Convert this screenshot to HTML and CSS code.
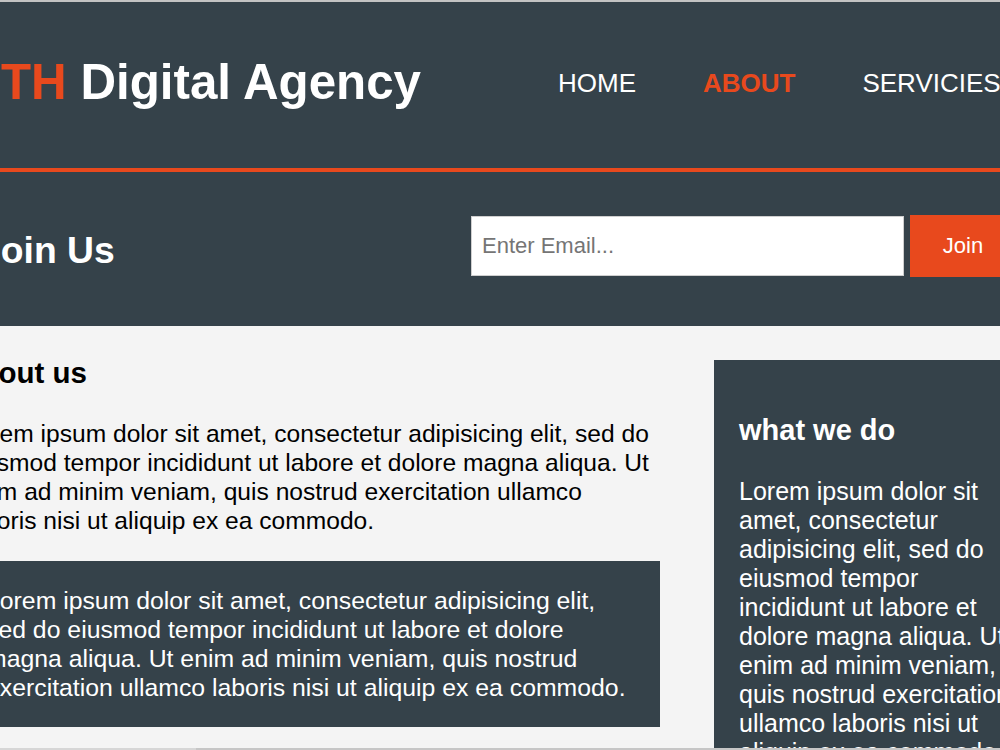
FILE: index.html
```html
<!DOCTYPE html>
<html lang="en">
<head>
<meta charset="utf-8">
<title>TH Digital Agency | About</title>
<link rel="stylesheet" href="styles.css">
</head>
<body>
<div class="topline"></div>
<header class="site-header">
  <div class="header-inner">
    <h1 class="brand"><span class="highlight">TH</span> Digital Agency</h1>
    <nav class="main-nav">
      <ul>
        <li><a href="#">HOME</a></li>
        <li class="current"><a href="#">ABOUT</a></li>
        <li><a href="#">SERVICIES</a></li>
      </ul>
    </nav>
  </div>
</header>
<section class="newsletter">
  <div class="newsletter-inner">
    <h2 class="newsletter-title">Join Us</h2>
    <form class="newsletter-form">
      <input type="email" placeholder="Enter Email...">
      <button type="button">Join</button>
    </form>
  </div>
</section>
<section class="main-area">
  <article class="main-col">
    <h1 class="page-title">about us</h1>
    <p class="lead">Lorem ipsum dolor sit amet, consectetur adipisicing elit, sed do eiusmod tempor incididunt ut labore et dolore magna aliqua. Ut enim ad minim veniam, quis nostrud exercitation ullamco laboris nisi ut aliquip ex ea commodo.</p>
    <div class="dark-box">
      <p>Lorem ipsum dolor sit amet, consectetur adipisicing elit, sed do eiusmod tempor incididunt ut labore et dolore magna aliqua. Ut enim ad minim veniam, quis nostrud exercitation ullamco laboris nisi ut aliquip ex ea commodo.</p>
    </div>
  </article>
  <aside class="sidebar">
    <h1 class="sidebar-title">what we do</h1>
    <p>Lorem ipsum dolor sit amet, consectetur adipisicing elit, sed do eiusmod tempor incididunt ut labore et dolore magna aliqua. Ut enim ad minim veniam, quis nostrud exercitation ullamco laboris nisi ut aliquip ex ea commodo.</p>
  </aside>
</section>
<div class="scrollbar"></div>
</body>
</html>
```
FILE: styles.css
```css
html, body {
  margin: 0;
  padding: 0;
  overflow: hidden;
}
body {
  font-family: "Liberation Sans", Arial, sans-serif;
  background: #f4f4f4;
  color: #000;
  width: 1000px;
  height: 750px;
}
.topline {
  height: 2px;
  background: #c3c3c3;
}
.site-header {
  background: #35424a;
  height: 166px;
  border-bottom: 4px solid #e8491d;
  color: #fff;
}
.header-inner {
  display: flex;
  align-items: flex-start;
  white-space: nowrap;
}
.brand {
  margin: 52px 0 0 1px;
  font-size: 49.3px;
  font-weight: bold;
  line-height: 56px;
}
.highlight {
  color: #e8491d;
}
.main-nav {
  margin: 66px 0 0 137px;
}
.main-nav ul {
  list-style: none;
  margin: 0;
  padding: 0;
  display: flex;
  column-gap: 67px;
}
.main-nav a {
  color: #fff;
  text-decoration: none;
  font-size: 26px;
  line-height: 30px;
}
.main-nav .current a {
  color: #e8491d;
  font-weight: bold;
}
.newsletter {
  background: #35424a;
  height: 154px;
  color: #fff;
}
.newsletter-inner {
  display: flex;
  align-items: flex-start;
  margin-left: -20px;
  white-space: nowrap;
}
.newsletter-title {
  flex: none;
  width: 491px;
  margin: 56px 0 0 0;
  font-size: 37.3px;
  line-height: 44px;
  font-weight: bold;
}
.newsletter-form {
  display: flex;
  align-items: center;
  gap: 6px;
  margin-top: 43px;
}
.newsletter-form input {
  box-sizing: border-box;
  width: 433px;
  height: 60px;
  margin: 0;
  padding: 0 10px;
  border: 1px solid #cfcfcf;
  background: #fff;
  font-family: "Liberation Sans", Arial, sans-serif;
  font-size: 22px;
  color: #333;
  outline: none;
}
.newsletter-form input::placeholder {
  color: #757575;
}
.newsletter-form button {
  box-sizing: border-box;
  height: 62px;
  width: 106px;
  margin: 0;
  padding: 0;
  border: none;
  background: #e8491d;
  color: #fff;
  font-family: "Liberation Sans", Arial, sans-serif;
  font-size: 22px;
}
.main-area {
  display: flex;
  align-items: flex-start;
  margin-left: -36px;
  gap: 54px;
}
.main-col {
  flex: none;
  width: 696px;
}
.page-title {
  margin: 30px 0 0 0;
  font-size: 29.5px;
  line-height: 33px;
  font-weight: bold;
}
.lead {
  margin: 30px 0 0 0;
  font-size: 24.6px;
  line-height: 29px;
}
.dark-box {
  margin-top: 26px;
  background: #35424a;
  color: #fff;
  padding: 25px 20px 25px 22px;
}
.dark-box p {
  margin: 0;
  font-size: 24.8px;
  line-height: 29px;
}
.sidebar {
  flex: none;
  box-sizing: border-box;
  width: 330px;
  margin-top: 34px;
  padding: 0 25px 25px 25px;
  background: #35424a;
  color: #fff;
  height: 420px;
}
.sidebar-title {
  margin: 0;
  padding-top: 54px;
  font-size: 29px;
  line-height: 33px;
  font-weight: bold;
}
.sidebar p {
  margin: 30px 0 0 0;
  font-size: 25px;
  line-height: 29px;
}
.scrollbar {
  position: fixed;
  left: 0;
  right: 0;
  bottom: 0;
  height: 2px;
  background: linear-gradient(to right, #d6d6d6 0, #d6d6d6 196px, #c6c6c6 196px);
}
```
